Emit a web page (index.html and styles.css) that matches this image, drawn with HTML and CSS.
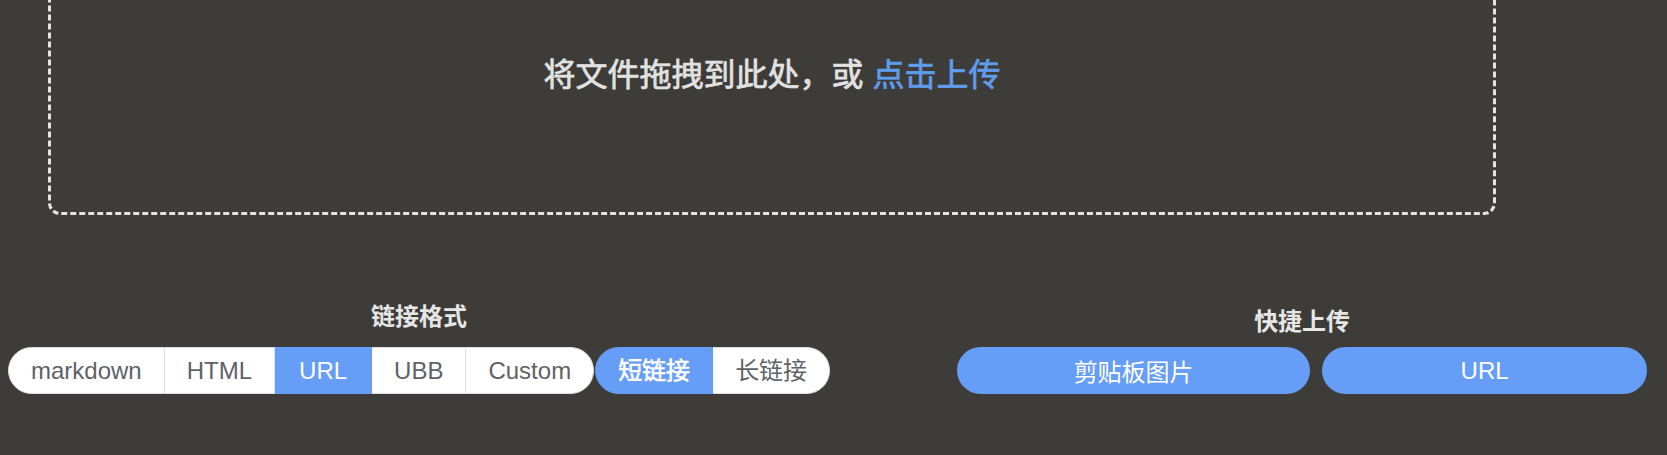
FILE: index.html
```html
<!DOCTYPE html>
<html lang="zh-CN">
<head>
<meta charset="utf-8">
<title>上传</title>
<link rel="stylesheet" href="styles.css">
</head>
<body>
<div class="uploader">
  <div class="uploader-text">将文件拖拽到此处，或 <em class="uploader-link">点击上传</em></div>
</div>
<div class="toolbar">
  <div class="section section-format">
    <div class="section-title">链接格式</div>
    <div class="groups">
      <div class="seg-group">
        <span class="seg seg-first">markdown</span>
        <span class="seg">HTML</span>
        <span class="seg seg-active">URL</span>
        <span class="seg">UBB</span>
        <span class="seg seg-last">Custom</span>
      </div>
      <div class="seg-group">
        <span class="seg seg-first seg-active seg-cjk seg-strong">短链接</span>
        <span class="seg seg-last seg-cjk">长链接</span>
      </div>
    </div>
  </div>
  <div class="section section-quick">
    <div class="section-title section-title-quick">快捷上传</div>
    <div class="quick-buttons">
      <button class="quick-btn quick-btn-clip">剪贴板图片</button>
      <button class="quick-btn quick-btn-url">URL</button>
    </div>
  </div>
</div>
</body>
</html>
```

FILE: styles.css
```css
html, body {
  margin: 0;
  padding: 0;
}
body {
  background: #3e3c38;
  font-family: "Liberation Sans", "Noto Sans CJK SC", sans-serif;
  overflow: hidden;
  height: 455px;
}
.uploader {
  box-sizing: border-box;
  margin: -65px 0 0 48px;
  width: 1448px;
  height: 280px;
  border: 3px dashed #e4e4e4;
  border-radius: 12px;
  display: flex;
  align-items: center;
  justify-content: center;
}
.uploader-text {
  font-size: 32px;
  font-weight: normal;
  -webkit-text-stroke: 0.7px currentColor;
  color: #e2e2e2;
  line-height: 40px;
}
.uploader-link {
  font-style: normal;
  color: #5f9cec;
}
.toolbar {
  display: flex;
  align-items: flex-end;
  margin-top: 88px;
  padding-left: 8px;
}
.section {
  display: flex;
  flex-direction: column;
  align-items: center;
}
.section-title {
  font-size: 24px;
  font-weight: bold;
  color: #e6e6e6;
  line-height: 28px;
  margin-bottom: 16px;
}
.section-title-quick {
  margin-bottom: 11px;
}
.groups {
  display: flex;
  gap: 1px;
}
.seg-group {
  display: flex;
}
.seg {
  box-sizing: border-box;
  height: 47px;
  line-height: 45px;
  padding: 0 22px;
  font-size: 24px;
  color: #606266;
  background: #fff;
  border: 1px solid #dcdfe6;
  border-left: none;
}
.seg-first {
  border-left: 1px solid #dcdfe6;
  border-radius: 24px 0 0 24px;
}
.seg-last {
  border-radius: 0 24px 24px 0;
}
.seg-active {
  background: #669df6;
  border-color: #669df6;
  color: #fff;
  padding: 0 24px;
}
.seg-cjk {
  padding: 0 22px;
}
.seg-strong {
  -webkit-text-stroke: 0.6px currentColor;
}
.seg-first.seg-active {
  border-left-color: #669df6;
}
.section-quick {
  margin-left: 127px;
}
.quick-buttons {
  display: flex;
  gap: 12px;
}
.quick-btn {
  box-sizing: border-box;
  height: 47px;
  border: none;
  border-radius: 24px;
  background: #669df6;
  color: #fff;
  font-family: "Liberation Sans", "Noto Sans CJK SC", sans-serif;
  font-size: 24px;
  padding: 0;
}
.quick-btn-clip {
  width: 353px;
}
.quick-btn-url {
  width: 325px;
}
```
